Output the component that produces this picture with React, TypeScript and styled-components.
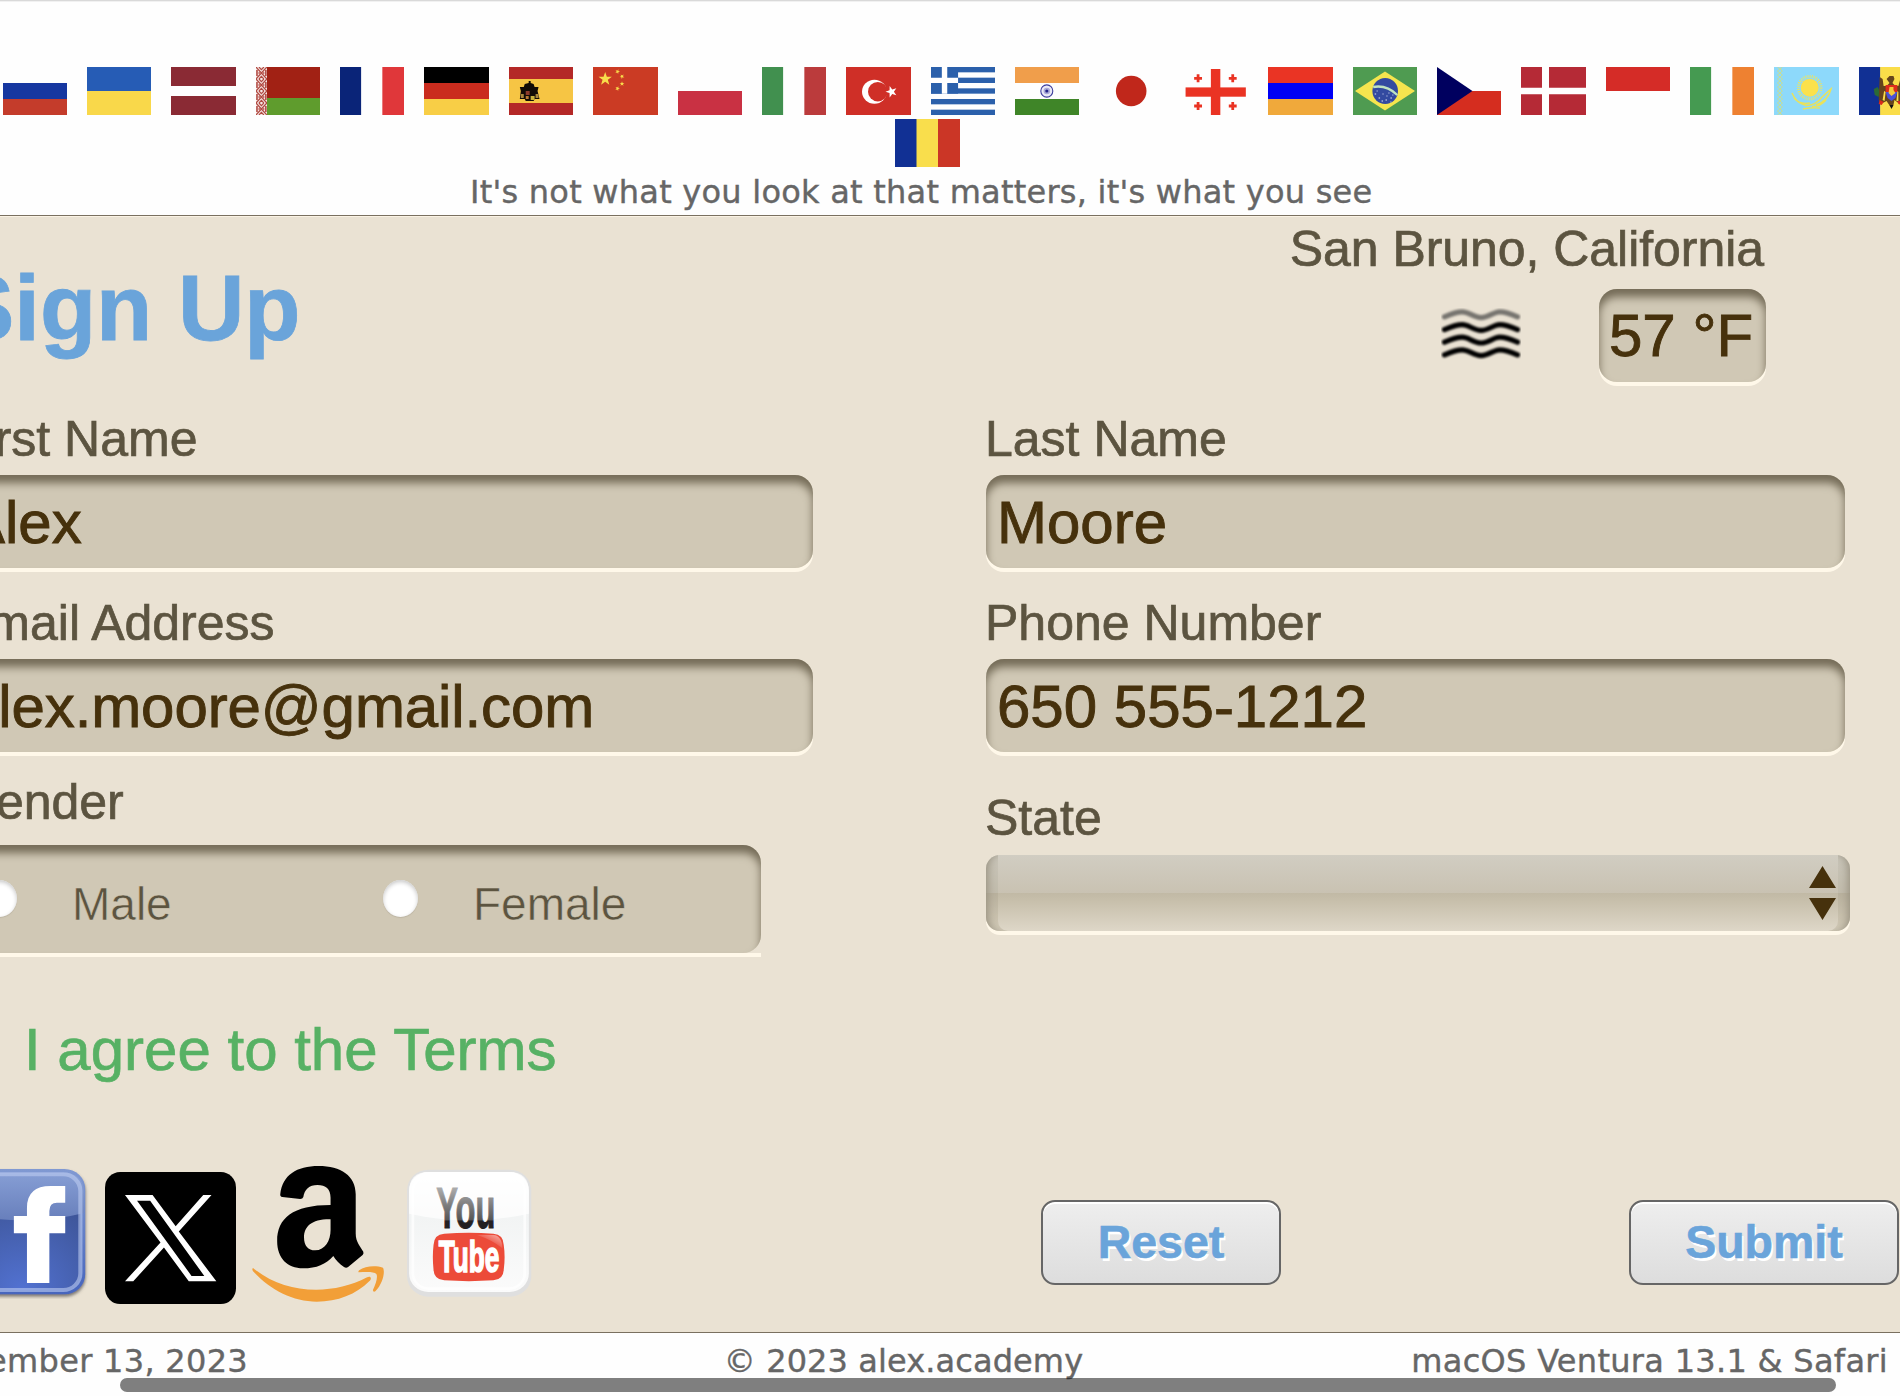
import React from 'react';
import styled, { createGlobalStyle } from 'styled-components';

const GlobalStyle = createGlobalStyle`
  html, body { margin: 0; padding: 0; background: #fff; overflow: hidden; }
  * { box-sizing: border-box; }
`;

const sans = '"Liberation Sans", Arial, Helvetica, sans-serif';
const wide = '"DejaVu Sans", Verdana, sans-serif';

const Page = styled.div`
  position: relative;
  width: 1900px;
  height: 1396px;
  overflow: hidden;
  display: flex;
  flex-direction: column;
  background: #fefefe;
  font-family: ${sans};
`;

const Header = styled.header`
  height: 215px;
  flex: none;
  border-top: 1px solid #d9d9d9;
  box-shadow: inset 0 1px 0 #f1f1f1;
  padding-top: 66px;
  overflow: hidden;
`;

const FlagRow = styled.div<{ $start: number }>`
  display: flex;
  margin-left: ${(p) => p.$start}px;
  height: 52px;
`;

const FlagCell = styled.div<{ $pitch: number }>`
  flex: none;
  width: ${(p) => p.$pitch}px;
`;

const FlagArt = styled.svg<{ $w: number }>`
  display: block;
  width: ${(p) => p.$w}px;
  height: 48px;
`;

const Tagline = styled.p`
  margin: 0 0 0 470px;
  font: 32px/43px ${wide};
  letter-spacing: 0.24px;
  color: #666;
  -webkit-text-stroke: 0.4px #666;
  white-space: nowrap;
`;

const Main = styled.main`
  height: 1118px;
  flex: none;
  border-top: 1px solid #7a7060;
  border-bottom: 1px solid #7a7060;
  box-shadow: inset 0 1px 0 #fbf3e4;
  background: #eae2d3;
`;

const Form = styled.form`
  margin-left: -46px;
  width: 1946px;
`;

const Top = styled.div`
  display: flex;
  justify-content: space-between;
  height: 194px;
  padding-right: 134px;
`;

const Title = styled.h1`
  margin: 37px 0 0 -1px;
  font: bold 92px/110px ${sans};
  color: #6aa4da;
  -webkit-text-stroke: 0.8px #6aa4da;
  white-space: nowrap;
`;

const Weather = styled.section`
  display: flex;
  flex-direction: column;
  align-items: flex-end;
  padding-top: 4px;
`;

const Label = styled.div<{ $shift?: number }>`
  margin-left: ${(p) => p.$shift ?? 0}px;
  font: 50px/58px ${sans};
  color: #5c5440;
  -webkit-text-stroke: 0.7px #5c5440;
  white-space: nowrap;
`;

const City = styled(Label)`
  margin: 0 2px 11px 0;
  letter-spacing: -0.05px;
`;

const Conditions = styled.div`
  display: flex;
  gap: 78px;
`;

const FogIcon = styled.svg`
  width: 80px;
  height: 52px;
  margin-top: 19px;
`;

const Well = styled.div`
  height: 93px;
  border-radius: 18px;
  background: #d0c8b5;
  box-shadow: inset 0 8px 8px #746b57, 0 4px 0 #fff8e9;
`;

const Field = styled(Well)<{ $tracking?: number }>`
  width: 859px;
  margin-top: 7px;
  padding: 1px 11px 0;
  font: 60px/93px ${sans};
  letter-spacing: ${(p) => p.$tracking ?? 0}px;
  color: #46310c;
  -webkit-text-stroke: 0.9px #46310c;
  white-space: nowrap;
`;

const Temperature = styled(Field)`
  width: 167px;
  margin-top: 0;
  padding: 0 0 0 10px;
`;

const Columns = styled.div`
  display: grid;
  grid-template-columns: 859px 864px;
  column-gap: 173px;
`;

const Column = styled.div`
  display: flex;
  flex-direction: column;
`;

const Group = styled.div<{ $gap?: number }>`
  margin-top: ${(p) => p.$gap ?? 0}px;
`;

const RadioBacking = styled.div`
  width: 807px;
  height: 112px;
  margin-top: 14px;
  background: linear-gradient(#eae2d3 0 108px, #fff8e9 108px);
`;

const RadioWell = styled(Well)`
  height: 108px;
  display: flex;
  padding: 35px 0 0 28px;
  box-shadow: inset 0 8px 8px #746b57;
`;

const RadioOption = styled.label<{ $width: number }>`
  display: flex;
  gap: 55px;
  width: ${(p) => p.$width}px;
  font: 46px/48px ${sans};
  color: #5c5440;
  -webkit-text-stroke: 0.5px #d0c8b5;
  white-space: nowrap;
`;

const RadioDot = styled.span`
  flex: none;
  width: 35px;
  height: 37px;
  border-radius: 50%;
  background: #fff;
  box-shadow: inset 0 2px 4px #c9c9c9, 0 1px 1px #bdb5a3;
`;

const Select = styled.div`
  width: 864px;
  height: 76px;
  margin-top: 8px;
  padding: 0 12px;
  border-radius: 14px;
  background: linear-gradient(#c9c5b9, #c2bcac 50%, #b9b19d 50%, #d2cab7);
  box-shadow: inset 8px 0 8px -6px #989180, inset -8px 0 8px -6px #989180, 0 4px 0 #fff8e9;
`;

const SelectFace = styled.div`
  height: 76px;
  border-radius: 0 0 10px 10px;
  background: linear-gradient(#d1cdc2, #c9c2b2 49.9%, #c1b9a5 50%, #c7bfab 60%, #ded7c8);
  display: flex;
  justify-content: flex-end;
  padding-right: 2px;
`;

const Arrows = styled.svg`
  width: 27px;
  height: 54px;
  margin-top: 11px;
`;

const Terms = styled.a`
  display: block;
  margin: 58px 0 0 70px;
  font: 60px/70px ${sans};
  color: #57b164;
  -webkit-text-stroke: 0.7px #57b164;
`;

const Bottom = styled.div`
  display: grid;
  grid-template-columns: 1032px auto;
  margin-top: 81px;
`;

const Social = styled.div`
  display: flex;
  align-items: flex-start;
  gap: 16px;
  padding-left: 3px;
`;

const Logo = styled.svg<{ $w: number; $h: number; $top?: number; $left?: number }>`
  flex: none;
  display: block;
  width: ${(p) => p.$w}px;
  height: ${(p) => p.$h}px;
  margin: ${(p) => p.$top ?? 0}px 0 0 ${(p) => p.$left ?? 0}px;
`;

const Actions = styled.div`
  display: flex;
  gap: 348px;
  padding: 34px 0 0 55px;
`;

const Button = styled.button<{ $width: number }>`
  width: ${(p) => p.$width}px;
  height: 85px;
  padding: 0;
  border: 2px solid #666;
  border-radius: 14px;
  background: linear-gradient(#eee, #ddd);
  box-shadow: inset 0 2px 0 #fff;
  font: bold 46.5px/81px ${sans};
  color: #6aa4da;
  -webkit-text-stroke: 0.6px #6aa4da;
  text-shadow: 2px 3px 0 #fff;
`;

const Footer = styled.footer`
  display: grid;
  grid-template-columns: 248px 1311px 341px;
  padding: 6px 0 0;
  font: 32px/45px ${wide};
  color: #666;
  -webkit-text-stroke: 0.4px #666;
  white-space: nowrap;
`;

const FooterCell = styled.div<{ $align: string; $pad?: number; $tracking: number }>`
  display: flex;
  justify-content: ${(p) => p.$align};
  padding-right: ${(p) => p.$pad ?? 0}px;
  letter-spacing: ${(p) => p.$tracking}px;
`;

const Scrollbar = styled.div`
  position: absolute;
  left: 120px;
  top: 1378px;
  width: 1716px;
  height: 14px;
  border-radius: 7px;
  background: rgba(0, 0, 0, 0.5);
`;

const Rows = ({ c }: { c: string[] }) => (
  <>{c.map((f, i) => <rect key={i} y={(48 / c.length) * i} width="65" height={48 / c.length} fill={f} />)}</>
);
const Bars = ({ c }: { c: string[] }) => (
  <>{c.map((f, i) => <rect key={i} x={[0, 21.5, 43][i]} width="22" height="48" fill={f} />)}</>
);

const starPoints = (cx: number, cy: number, r: number, turn = 0) =>
  Array.from({ length: 10 }, (_, i) => {
    const a = (i * 36 - 90 + turn) * (Math.PI / 180);
    const d = i % 2 ? r * 0.4 : r;
    return `${(cx + d * Math.cos(a)).toFixed(2)},${(cy + d * Math.sin(a)).toFixed(2)}`;
  }).join(' ');

const flags: React.ReactNode[] = [
  <Rows c={['#fefefe', '#1637a0', '#c43c2b']} />,
  <Rows c={['#265cb5', '#f9d84a']} />,
  <><rect width="65" height="19" fill="#8a2a34" /><rect y="29" width="65" height="19" fill="#8a2a34" /></>,
  <>
    <rect x="11" width="54" height="31" fill="#a12114" /><rect x="11" y="31" width="54" height="17" fill="#5f9c2d" />
    <rect width="11" height="48" fill="#f6e9e7" />
    {[0, 1, 2, 3].map((i) => (
      <g key={i} fill="none" stroke="#b14a42" strokeWidth="1.2" transform={`translate(0 ${i * 12})`}>
        <path d="M0 0 L5.5 6 L11 0 M0 12 L5.5 6 L11 12 M3 0 L5.5 2.6 L8 0 M3 12 L5.5 9.4 L8 12" />
        <path d="M1 3 V9 M10 3 V9 M2.5 6 H4 M7 6 H8.5" strokeWidth="1.6" />
      </g>
    ))}
  </>,
  <Bars c={['#0a2478', '#fefefe', '#e0373a']} />,
  <Rows c={['#000', '#ca2c1e', '#f8ce46']} />,
  <>
    <rect width="65" height="48" fill="#b42827" /><rect y="12" width="65" height="24" fill="#f6c544" />
    <path d="M15 20 L16 17 L20 16 L20 14 L22 14 L22 16 L25 17 L26 20 L30 20 L29 24 L31 32 H26 L25 34 H17 L16 32 H11 L12 24 L11 20 Z" fill="#120b06" />
    <path d="M12 27 H15 V31 H12 Z M27 27 H30 V31 H27 Z" fill="#a8863c" />
    <path d="M17 24 H21 V28 H17 Z" fill="#8b3a2a" /><path d="M22 29 H26 V33 H22 Z" fill="#c9b13c" /><path d="M17 29 H20 V32 H17 Z" fill="#b97a34" />
  </>,
  <>
    <rect width="65" height="48" fill="#cb3b24" />
    <g fill="#f8dd4b">
      <polygon points={starPoints(12.2, 12, 7)} />
      <polygon points={starPoints(24.5, 4.6, 2.5, 20)} /><polygon points={starPoints(29, 9.5, 2.5, 40)} />
      <polygon points={starPoints(29, 16.8, 2.5)} /><polygon points={starPoints(24.5, 21.5, 2.5, 20)} />
    </g>
  </>,
  <Rows c={['#fefefe', '#c93143']} />,
  <Bars c={['#41904f', '#fefefe', '#bb3b3c']} />,
  <>
    <rect width="65" height="48" fill="#cf2f27" />
    <ellipse cx="28.4" cy="24.7" rx="12.4" ry="12" fill="#fff" /><ellipse cx="31.8" cy="24.7" rx="9.8" ry="9.7" fill="#cf2f27" />
    <polygon points={starPoints(45.5, 24.7, 6, -90)} fill="#fff" />
  </>,
  <>
    <rect width="65" height="48" fill="#fefefe" />
    {[0, 2, 4, 6, 8].map((i) => <rect key={i} y={i * 5.333} width="65" height="5.333" fill="#2b60ab" />)}
    <rect width="27.5" height="26.67" fill="#2b60ab" /><path d="M11 0 H16.5 V26.67 H11 Z M0 10.67 H27.5 V16 H0 Z" fill="#fff" />
  </>,
  <>
    <Rows c={['#f09e4b', '#fefefe', '#3f8528']} />
    <circle cx="32.3" cy="24" r="6.1" fill="#e9e9f6" stroke="#3b3b9c" strokeWidth="1.1" />
    <circle cx="32.3" cy="24" r="3.3" fill="#a9a9d8" /><circle cx="32.3" cy="24" r="1.6" fill="#22228a" />
  </>,
  <circle cx="32.2" cy="24" r="15.3" fill="#c0271b" />,
  <g fill="#ea3323">
    <rect x="1.6" y="20.4" width="61.2" height="9.3" /><rect x="27.3" y="2" width="9.6" height="46" />
    {[[14.3, 11.3], [49.5, 11.3], [14.3, 39], [49.5, 39]].map(([x, y]) => (
      <path key={`${x}-${y}`} d={`M${x - 4} ${y - 1.4} h8 v2.8 h-8 Z M${x - 1.4} ${y - 4} h2.8 v8 h-2.8 Z`} />
    ))}
  </g>,
  <Rows c={['#ea3424', '#0000f5', '#f0a93b']} />,
  <>
    <rect width="65" height="48" fill="#4f9b51" /><path d="M2 24 L32.5 4.5 L63 24 L32.5 43.5 Z" fill="#f5e54e" />
    <circle cx="32.7" cy="24" r="13" fill="#334aa0" />
    <path d="M20.5 20 Q34 17.5 45 28" fill="none" stroke="#bfe3c0" strokeWidth="2.4" />
    <path d="M22 27h1.5M26 31h1.5M30 27h1M33 33h1.5M38 31h1.5M29 34h1.5M36 26h1M40 28h1M34 29h1M24 24h1M38 35h1" stroke="#dfe4f4" strokeWidth="1.2" />
  </>,
  <><rect y="24" width="65" height="24" fill="#d52d1f" /><path d="M0 0 L36 24 L0 48 Z" fill="#00005f" /></>,
  <path d="M0 0 H21 V20.7 H0 Z M28 0 H65 V20.7 H28 Z M0 27.3 H21 V48 H0 Z M28 27.3 H65 V48 H28 Z" fill="#b52a36" />,
  <Rows c={['#d52c27', '#fefefe']} />,
  <Bars c={['#459a51', '#fefefe', '#ee8131']} />,
  <>
    <rect width="65" height="48" fill="#8dd9fb" />
    <circle cx="35.7" cy="20.7" r="11.3" fill="none" stroke="#e9e566" strokeWidth="3" strokeDasharray="1 1.2" />
    <circle cx="35.7" cy="20.7" r="9" fill="#fbe14b" />
    <path d="M18 26 Q22 36 32 38.5 Q42 38.5 48 30 L57 22 Q54 34 42 38 M20 31 Q26 38 36 36 M52 33 Q46 40 38 39.5 M29 42 Q38 40 46 41" fill="none" stroke="#e9e25c" strokeWidth="1.5" />
    {[0, 1, 2, 3, 4, 5].map((i) => <path key={i} transform={`translate(0 ${i * 8})`} d="M3.4 0 L8.4 4 L3.4 8 M8.4 0 L3.4 4 L8.4 8" fill="none" stroke="#cfdf86" strokeWidth="0.9" />)}
  </>,
  <>
    <Bars c={['#113094', '#fadd49', '#cb3626']} />
    <path d="M15 22 l4 -2 l2 4 l-1 6 l-4 -2 Z" fill="#2c6a35" />
    <path d="M21 10 L24 12 L25 19 H28 L31 16 L28 12 L31 9 L35 9 L36 12 L34 16 L37 19 H40 L42 12 L44 10 V32 L40 36 L36 33 L35 38 L33 41 L30 37 L28 34 L22 37 L20 33 Z" fill="#66451c" />
    <path d="M27 18 H39 V25 H27 Z" fill="#dd2c1c" /><path d="M27 25 H39 L37 31 L33 34 L29 31 Z" fill="#4a51d8" />
    <path d="M31 20 H35 V23 L37 26 L33 29 L30 26 Z" fill="#f5c938" />
    <path d="M25.5 24 l1.5 1 l-1 9 l-2 -1 Z M38 34 h2 v-9 l-1 -1 Z" fill="#fadd49" />
    <path d="M21 33 l4 2 l-2 3 l-3 -1 Z M39 34 l3 0 l2 4 l-4 -1 Z" fill="#da2a1c" /><path d="M31 38 h4 l-2 4 Z" fill="#111" />
  </>,
];

const flagLeft = (i: number) => 3.1 + 84.37 * i;
const flagStart = (i: number) => Math.floor(flagLeft(i));

const Fog = () => (
  <FogIcon viewBox="0 0 80 52">
    <defs><filter id="soft" x="-5%" y="-10%" width="110%" height="120%"><feGaussianBlur stdDeviation="0.8" /></filter></defs>
    <g fill="none" strokeWidth="5.2" strokeLinecap="round" strokeLinejoin="round" filter="url(#soft)">
      {[8.8, 21.6, 34.2, 46.8].map((y, i) => (
        <path key={y} stroke={i ? '#050505' : '#777570'} d={`M3.5 ${y} C9 ${y - 2.5} 16 ${y - 5} 21.5 ${y - 5} S33 ${y + 0.6} 40 ${y + 0.8} S53 ${y - 5} 58.5 ${y - 5} S71 ${y - 2.5} 76.5 ${y}`} />
      ))}
    </g>
  </FogIcon>
);

const Facebook = () => (
  <Logo viewBox="-125 33 383 399" preserveAspectRatio="none" $w={132} $h={133}>
    <defs>
      <radialGradient id="fbBody" cx="0.5" cy="1" r="0.85"><stop offset="0" stopColor="#5272d2" /><stop offset="1" stopColor="#3d5496" /></radialGradient>
      <linearGradient id="fbGloss" x2="0" y2="1"><stop offset="0" stopColor="#8aa2d8" /><stop offset="1" stopColor="#6a81bd" /></linearGradient>
      <linearGradient id="fbRim" x2="0" y2="1"><stop offset="0" stopColor="#8099d2" /><stop offset="1" stopColor="#4765bd" /></linearGradient>
      <filter id="fbShadow" x="-10%" y="-10%" width="120%" height="125%"><feDropShadow dx="1" dy="7" stdDeviation="4" floodColor="#4c4a48" floodOpacity="0.7" /></filter>
    </defs>
    <rect x="-122" y="42" width="369" height="376" rx="60" fill="url(#fbRim)" filter="url(#fbShadow)" />
    <rect x="-108" y="58" width="341" height="348" rx="48" fill="url(#fbBody)" />
    <path d="M-114 170 V108 Q-114 54 -62 54 H185 Q240 54 244 108 V174 Q140 200 60 196 Q-20 196 -114 170 Z" fill="url(#fbGloss)" opacity="0.95" />
    <rect x="-106" y="58" width="339" height="347" rx="50" fill="none" stroke="#bccbf0" strokeOpacity="0.6" strokeWidth="12" />
    <path d="M78 384 V235 H40 V183 H78 V158 Q78 93 147 93 H189 V143 H165 Q143 143 143 168 V183 H189 V235 H143 V384 Z" fill="#fff" />
  </Logo>
);

const XLogo = () => (
  <Logo viewBox="305 51 380 395" preserveAspectRatio="none" $w={131} $h={132} $top={6}>
    <rect x="305" y="51" width="380" height="395" rx="44" ry="47" fill="#000" />
    <path d="M590 120 H614 L519 229 L628 378 H548 L476 277 L387 378 H363 L466 262 L363 120 H443 L510 213 Z M398 137 L556 362 H593 L436 137 Z" fill="#fff" fillRule="evenodd" />
  </Logo>
);

const Amazon = () => (
  <Logo viewBox="732 33 386 411" preserveAspectRatio="none" $w={133} $h={137}>
    <path d="M814 118 C820 60 862 33 925 33 C990 33 1033 62 1033 118 V235 C1033 262 1046 274 1055 290 Q1057 295 1053 300 L1011 336 Q1005 341 999 336 C985 326 975 316 968 303 C946 328 920 340 880 340 C835 340 805 310 805 258 C805 190 850 150 960 150 V128 C960 102 946 90 922 90 C898 90 884 104 881 126 Q879 132 872 132 L820 126 Q813 125 814 118 Z M960 193 C905 192 883 214 883 248 C883 271 895 286 915 286 C945 286 960 256 960 225 Z" fill="#000" fillRule="evenodd" />
    <path d="M735 339 C790 385 850 404 918 404 C970 404 1020 392 1066 367 C1076 362 1081 370 1073 378 C1035 418 980 440 920 440 C850 440 785 405 735 349 Q731 342 735 339 Z" fill="#f29f38" />
    <path d="M1042 352 Q1039 350 1043 346 C1060 333 1090 331 1112 338 C1119 350 1112 385 1090 409 Q1083 412 1083 405 C1091 388 1098 366 1093 357 C1086 349 1060 351 1042 352 Z" fill="#f29f38" />
  </Logo>
);

const YouTube = () => (
  <Logo viewBox="1179 39 369 390" preserveAspectRatio="none" $w={127} $h={130} $top={2} $left={5}>
    <defs>
      <linearGradient id="ytBody" x2="0" y2="1"><stop offset="0" stopColor="#fff" /><stop offset="0.38" stopColor="#f2f4f4" /><stop offset="1" stopColor="#fbfbfb" /></linearGradient>
      <linearGradient id="ytInk" gradientUnits="userSpaceOnUse" x1="0" y1="100" x2="0" y2="222"><stop offset="0" stopColor="#ababab" /><stop offset="0.78" stopColor="#555" /><stop offset="0.8" stopColor="#232021" /><stop offset="1" stopColor="#232021" /></linearGradient>
      <linearGradient id="ytShine" x1="0.4" y1="0.6" x2="1" y2="0"><stop offset="0" stopColor="#fff" stopOpacity="0" /><stop offset="1" stopColor="#fff" stopOpacity="0.6" /></linearGradient>
    </defs>
    <rect x="1182" y="44" width="361" height="381" rx="62" fill="#dfdfdf" />
    <rect x="1188" y="51" width="348" height="360" rx="56" fill="url(#ytBody)" />
    <path d="M1188 176 Q1362 216 1536 176 V110 Q1536 51 1480 51 H1244 Q1188 51 1188 110 Z" fill="#fff" opacity="0.7" />
    <rect x="1199" y="63" width="325" height="338" rx="46" fill="none" stroke="#fff" strokeOpacity="0.7" strokeWidth="8" />
    <text x="1267" y="220" fontFamily="Liberation Sans, sans-serif" fontWeight="bold" fontSize="170" textLength="172" lengthAdjust="spacingAndGlyphs" fill="url(#ytInk)" stroke="url(#ytInk)" strokeWidth="3">You</text>
    <path d="M1290 236 Q1362 231 1433 236 Q1462 238 1463 270 Q1468 306 1463 344 Q1462 374 1433 376 Q1362 381 1290 376 Q1260 374 1259 344 Q1255 306 1259 270 Q1260 238 1290 236 Z" fill="#ec4b39" />
    <path d="M1385 240 H1433 Q1458 242 1459 280 Q1430 255 1385 240 Z" fill="url(#ytShine)" />
    <text x="1274" y="350" fontFamily="Liberation Sans, sans-serif" fontWeight="bold" fontSize="134" textLength="176" lengthAdjust="spacingAndGlyphs" fill="#fff" stroke="#fff" strokeWidth="5">Tube</text>
  </Logo>
);

export default function App() {
  return (
    <Page>
      <GlobalStyle />
      <Header>
        <FlagRow $start={3}>
          {flags.map((art, i) => (
            <FlagCell key={i} $pitch={flagStart(i + 1) - flagStart(i)}>
              <FlagArt viewBox="0 0 65 48" preserveAspectRatio="none" $w={Math.floor(flagLeft(i) + 64.4) - flagStart(i)}>
                {art}
              </FlagArt>
            </FlagCell>
          ))}
        </FlagRow>
        <FlagRow $start={895}>
          <FlagArt viewBox="0 0 65 48" $w={65}>
            <Bars c={['#113094', '#f9de4c', '#cb3626']} />
          </FlagArt>
        </FlagRow>
        <Tagline>It's not what you look at that matters, it's what you see</Tagline>
      </Header>
      <Main>
        <Form onSubmit={(e) => e.preventDefault()}>
          <Top>
            <Title>Sign Up</Title>
            <Weather>
              <City>San Bruno, California</City>
              <Conditions>
                <Fog />
                <Temperature>57 °F</Temperature>
              </Conditions>
            </Weather>
          </Top>
          <Columns>
            <Column>
              <Group><Label $shift={-1}>First Name</Label><Field>Alex</Field></Group>
              <Group $gap={26}><Label $shift={1}>Email Address</Label><Field $tracking={-0.1}>alex.moore@gmail.com</Field></Group>
              <Group $gap={21}>
                <Label $shift={3}>Gender</Label>
                <RadioBacking>
                  <RadioWell>
                    <RadioOption $width={401}><RadioDot />Male</RadioOption>
                    <RadioOption $width={300}><RadioDot />Female</RadioOption>
                  </RadioWell>
                </RadioBacking>
              </Group>
            </Column>
            <Column>
              <Group><Label $shift={-1}>Last Name</Label><Field>Moore</Field></Group>
              <Group $gap={26}><Label $shift={-1}>Phone Number</Label><Field>650 555-1212</Field></Group>
              <Group $gap={37}>
                <Label $shift={-1}>State</Label>
                <Select>
                  <SelectFace>
                    <Arrows viewBox="0 0 27 54"><path d="M13.5 0 L27 22 H0 Z M0 32 H27 L13.5 54 Z" fill="#46310c" /></Arrows>
                  </SelectFace>
                </Select>
              </Group>
            </Column>
          </Columns>
          <Terms>I agree to the Terms</Terms>
          <Bottom>
            <Social><Facebook /><XLogo /><Amazon /><YouTube /></Social>
            <Actions>
              <Button type="reset" $width={240}>Reset</Button>
              <Button type="submit" $width={270}>Submit</Button>
            </Actions>
          </Bottom>
        </Form>
      </Main>
      <Footer>
        <FooterCell $align="flex-end" $tracking={0.3}>December 13, 2023</FooterCell>
        <FooterCell $align="center" $tracking={0.1}>© 2023 alex.academy</FooterCell>
        <FooterCell $align="flex-end" $tracking={0.3} $pad={12}>macOS Ventura 13.1 &amp; Safari</FooterCell>
      </Footer>
      <Scrollbar />
    </Page>
  );
}
